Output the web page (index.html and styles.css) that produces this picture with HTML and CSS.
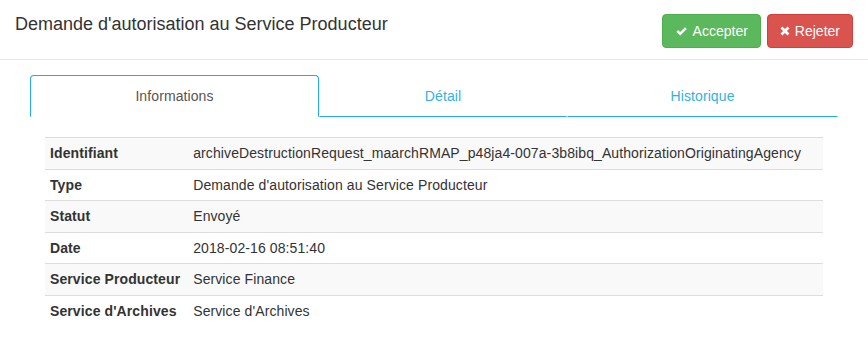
FILE: index.html
```html
<!DOCTYPE html>
<html lang="fr">
<head>
  <meta charset="UTF-8">
  <title>Demande d'autorisation</title>
  <link rel="stylesheet" href="styles.css">
</head>
<body>
  <div class="modal-header">
      <h4 class="modal-title">Demande d'autorisation au Service Producteur</h4>
      <div class="actions">
          <button class="btn btn-success">
              <svg class="icon" viewBox="0 0 14 14"><path d="M1.5 7.3 L3.4 5.4 L5.6 7.6 L10.8 2.4 L12.7 4.3 L5.6 11.4 Z" fill="#fff"/></svg>
              Accepter
          </button>
          <button class="btn btn-danger">
              <svg class="icon icon-small" viewBox="0 0 12 12"><path d="M2.9 0.6 L6 3.7 L9.1 0.6 L11.4 2.9 L8.3 6 L11.4 9.1 L9.1 11.4 L6 8.3 L2.9 11.4 L0.6 9.1 L3.7 6 L0.6 2.9 Z" fill="#fff"/></svg>
              Rejeter
          </button>
      </div>
  </div>

  <div class="modal-body">
      <ul class="nav-tabs">
          <li class="active"><a href="#">Informations</a></li>
          <li><a href="#">Détail</a></li>
          <li><a href="#">Historique</a></li>
      </ul>

      <table class="table-striped">
          <tr><th>Identifiant</th><td>archiveDestructionRequest_maarchRMAP_p48ja4-007a-3b8ibq_AuthorizationOriginatingAgency</td></tr>
          <tr><th>Type</th><td>Demande d'autorisation au Service Producteur</td></tr>
          <tr><th>Statut</th><td>Envoyé</td></tr>
          <tr><th>Date</th><td>2018-02-16 08:51:40</td></tr>
          <tr><th>Service Producteur</th><td>Service Finance</td></tr>
          <tr><th>Service d'Archives</th><td>Service d'Archives</td></tr>
      </table>
  </div>
</body>
</html>
```

FILE: styles.css
```css
body {
    margin: 0;
    font-family: 'Liberation Sans', Arial, sans-serif;
    font-size: 14px;
    color: #333333;
    background-color: white;
}
.modal-header {
    display: flex;
    justify-content: space-between;
    align-items: flex-start;
    padding: 11px 15px 11px 15px;
    border-bottom: 1px solid #e5e5e5;
}
.modal-title {
    margin: 1px 0 0 0;
    font-size: 18px;
    font-weight: normal;
    line-height: 25px;
}
.actions {
    display: flex;
    gap: 6px;
    margin-top: 3px;
}
.btn {
    display: flex;
    align-items: center;
    gap: 5px;
    font-family: inherit;
    font-size: 14px;
    line-height: 20px;
    padding: 6px 12px;
    color: white;
    border: 1px solid transparent;
    border-radius: 4px;
}
.btn-success {
    background-color: #5cb85c;
    border-color: #4cae4c;
}
.btn-danger {
    background-color: #d9534f;
    border-color: #d43f3a;
}
.icon {
    width: 13px;
    height: 13px;
}
.icon-small {
    width: 10px;
    height: 10px;
}
.modal-body {
    padding: 15px 30px;
}
.nav-tabs {
    display: grid;
    grid-template-columns: 289fr 248fr 271fr;
    list-style: none;
    margin: 0 0 20px 0;
    padding: 0;
    letter-spacing: 0.1px;
}
.nav-tabs li a {
    display: block;
    text-align: center;
    padding: 10px 15px;
    line-height: 20px;
    color: #35b0e6;
    text-decoration: none;
    border: 1px solid transparent;
    border-bottom: 1.5px solid #22abe6;
    border-radius: 4px 4px 0 0;
}
.nav-tabs li.active a {
    color: #555555;
    border: 1.5px solid #22abe6;
    border-bottom-color: transparent;
}
.table-striped {
    width: calc(100% - 30px);
    margin: 0 15px;
    border-collapse: collapse;
    letter-spacing: 0.1px;
}
.table-striped th,
.table-striped td {
    text-align: left;
    padding: 5px 5px;
    line-height: 20.6px;
    border-top: 1px solid #dddddd;
    white-space: nowrap;
}
.table-striped th {
    width: 1%;
    padding-right: 8px;
}
.table-striped tr:nth-child(odd) {
    background-color: #f9f9f9;
}
```
